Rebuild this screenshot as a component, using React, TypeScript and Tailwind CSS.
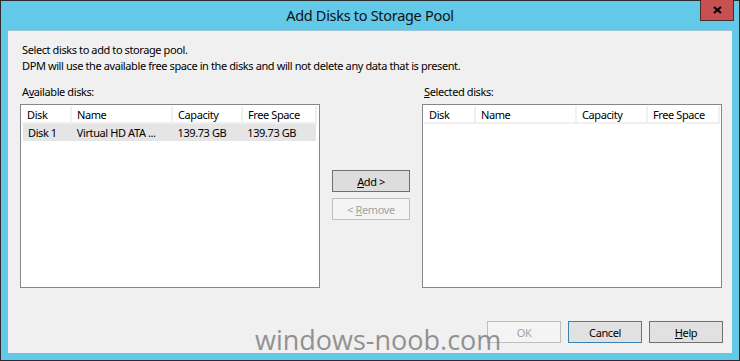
import React from "react";

type Col = { label: string; w: number };

const leftCols: Col[] = [
  { label: "Disk", w: 50 },
  { label: "Name", w: 101 },
  { label: "Capacity", w: 70 },
  { label: "Free Space", w: 74 },
];

const rightCols: Col[] = [
  { label: "Disk", w: 52 },
  { label: "Name", w: 101 },
  { label: "Capacity", w: 71 },
  { label: "Free Space", w: 72 },
];

function ListView({ cols, rows }: { cols: Col[]; rows: string[][] }) {
  return (
    <div className="w-[300px] h-[184px] border border-[#828790] bg-white p-px">
      {/* header */}
      <div className="flex h-[18px]">
        {cols.map((c) => (
          <div
            key={c.label}
            style={{ width: c.w }}
            className="h-full border-r-2 border-b-2 border-[#f0f0f0] pl-[5px] leading-[17px] text-[#000] whitespace-nowrap"
          >
            {c.label}
          </div>
        ))}
      </div>
      {rows.map((r, i) => (
        <div key={i} className="flex h-[17px] bg-[#e5e5e5] ml-px mr-[2px]">
          {r.map((v, j) => (
            <div
              key={j}
              style={{ width: cols[j].w - (j === 0 ? 1 : 0) }}
              className="pl-[5px] leading-[17px] whitespace-nowrap overflow-hidden"
            >
              {v}
            </div>
          ))}
        </div>
      ))}
    </div>
  );
}

function Btn({
  children,
  kind = "normal",
  w = "w-[78px]",
}: {
  children: React.ReactNode;
  kind?: "normal" | "default" | "disabled" | "focus";
  w?: string;
}) {
  const cls =
    kind === "disabled"
      ? "border-[#bfbfbf] bg-[#f4f4f4] text-[#a3a3a3]"
      : kind === "focus"
      ? "border-[#3c7fb1] bg-[#e1e1e1] text-black"
      : kind === "default"
      ? "border-[#707070] bg-[#dddddd] text-black"
      : "border-[#707070] bg-[#e1e1e1] text-black";
  return (
    <div className={`${w} h-[22px] border flex items-center justify-center leading-none ${cls}`}>
      {children}
    </div>
  );
}

export default function App() {
  return (
    <div
      className="relative w-[740px] h-[361px] bg-[#63c9e9] border border-[#2b2b2b] flex flex-col text-[11px] tracking-[-0.4px] text-black"
      style={{ fontFamily: '"Noto Sans", "Open Sans", sans-serif' }}
    >
      {/* Title bar */}
      <div className="relative h-[29px] flex items-center justify-center">
        <span className="text-[14.5px] tracking-[-0.3px] text-[#111] mt-[1px]">Add Disks to Storage Pool</span>
        <div className="absolute right-[5px] top-[-1px] w-[34px] h-[21px] bg-[#c75050] border border-[#4a2a2a] border-t-0 flex items-center justify-center">
          <svg width="9" height="8" viewBox="0 0 9 8">
            <path d="M1 1 L8 7 M8 1 L1 7" stroke="#000" strokeWidth="2" />
          </svg>
        </div>
      </div>

      {/* Client area */}
      <div className="flex-1 mx-[7px] mb-[7px] bg-[#f0f0f0] border-t border-[#9fc6d6] flex flex-col">
        <div className="pl-[14px] pt-[11px] leading-[16px]">
          <p>Select disks to add to storage pool.</p>
          <p>DPM will use the available free space in the disks and will not delete any data that is present.</p>
        </div>

        <div className="flex mt-[10px] pl-[12px]">
          {/* Left list */}
          <div className="flex flex-col">
            <p className="pl-[2px] leading-[16px] mb-[4px]">
              A<span className="underline">v</span>ailable disks:
            </p>
            <ListView
              cols={leftCols}
              rows={[["Disk 1", "Virtual HD ATA ...", "139.73 GB", "139.73 GB"]]}
            />
          </div>

          {/* Middle buttons */}
          <div className="w-[102px] flex flex-col items-center pt-[86px] gap-[6px]">
            <Btn kind="default">
              <span>
                <span className="underline">A</span>dd &gt;
              </span>
            </Btn>
            <Btn kind="disabled">
              <span>
                &lt; <span className="underline">R</span>emove
              </span>
            </Btn>
          </div>

          {/* Right list */}
          <div className="flex flex-col">
            <p className="pl-[2px] leading-[16px] mb-[4px]">
              <span className="underline">S</span>elected disks:
            </p>
            <ListView cols={rightCols} rows={[]} />
          </div>
        </div>

        {/* Dialog buttons */}
        <div className="flex justify-end gap-[7px] pr-[9px] mt-[33px]">
          <Btn kind="disabled" w="w-[74px]">OK</Btn>
          <Btn kind="focus" w="w-[74px]">Cancel</Btn>
          <Btn w="w-[74px]">
            <span>
              <span className="underline">H</span>elp
            </span>
          </Btn>
        </div>
      </div>

      {/* watermark */}
      <div
        className="absolute left-[254px] top-[322px] text-[27px] leading-[34px] tracking-normal text-[#7a7a7a] opacity-80 pointer-events-none"
        style={{ fontFamily: '"Open Sans", "Noto Sans", sans-serif' }}
      >
        windows-noob.com
      </div>
    </div>
  );
}
